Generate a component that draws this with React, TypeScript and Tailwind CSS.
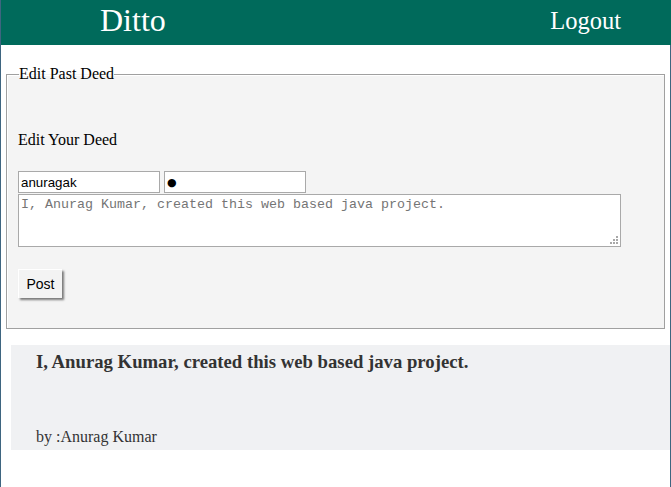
import React from "react";

export default function App() {
  return (
    <div className="min-h-[487px] w-[671px] border-l border-[#3e6580] bg-white font-['Liberation_Serif',serif] text-black">
      <header className="flex h-[45px] w-[670px] items-start bg-[#006a5b] text-white">
        <h1 className="ml-[99px] mt-[4px] text-[32px] font-normal leading-[32px]">Ditto</h1>
        <span className="ml-auto mr-[50px] mt-[9px] text-[24.5px] leading-[24px]">Logout</span>
      </header>
      <div className="min-h-[442px] w-[670px] border-r border-[#3e6580] pt-[20px]">
        <fieldset className="mx-[5px] border border-[#a0a0a0] bg-[#f4f4f4] px-[11px] pb-[30px] shadow-[inset_1px_1px_0_#fff,1px_1px_0_#fff]">
          <legend className="ml-px text-[16px] leading-[18.4px]">Edit Past Deed</legend>
          <p className="mt-[48px] text-[16px] leading-[18.4px]">Edit Your Deed</p>
          <div className="mt-[21.6px] flex gap-[4px] font-['Liberation_Sans',Arial,sans-serif] text-[13.33px]">
            <input
              type="text"
              defaultValue="anuragak"
              className="h-[22px] w-[142px] border border-[#a9a9a9] bg-white px-[2px] text-black outline-none"
            />
            <input
              type="text"
              defaultValue="●"
              className="h-[22px] w-[142px] border border-[#a9a9a9] bg-white px-[2px] font-['DejaVu_Sans',sans-serif] text-[11px] text-black outline-none"
            />
          </div>
          <div className="relative mt-px h-[53px] w-[603px]">
            <textarea
              placeholder="I, Anurag Kumar, created this web based java project."
              className="block h-[53px] w-[603px] resize-none border border-[#a9a9a9] bg-white px-[2px] py-[2px] font-['Liberation_Mono',monospace] text-[13.33px] leading-[15px] text-black outline-none placeholder:text-[#757575]"
            />
            <svg className="absolute bottom-[3px] right-[3px]" width="8" height="8" viewBox="0 0 8 8">
              <rect x="6" y="0" width="2" height="2" fill="#a8a8a8" />
              <rect x="3" y="3" width="2" height="2" fill="#a8a8a8" />
              <rect x="6" y="3" width="2" height="2" fill="#a8a8a8" />
              <rect x="0" y="6" width="2" height="2" fill="#a8a8a8" />
              <rect x="3" y="6" width="2" height="2" fill="#a8a8a8" />
              <rect x="6" y="6" width="2" height="2" fill="#a8a8a8" />
            </svg>
          </div>
          <button className="mt-[22px] flex h-[29px] w-[44px] items-center justify-center border-l border-t border-white bg-[#f3f3f3] font-['Liberation_Sans',Arial,sans-serif] text-[14px] text-black shadow-[2px_2px_2px_#7a7a7a]">
            Post
          </button>
        </fieldset>
        <div className="ml-[10px] mt-[16px] h-[105px] bg-[#f0f1f3] pl-[25px] pt-[6px] text-[#333]">
          <h3 className="text-[18.72px] font-bold leading-[21.5px]">
            I, Anurag Kumar, created this web based java project.
          </h3>
          <p className="mt-[55px] text-[16px] leading-[18.4px]">by :Anurag Kumar</p>
        </div>
      </div>
    </div>
  );
}
